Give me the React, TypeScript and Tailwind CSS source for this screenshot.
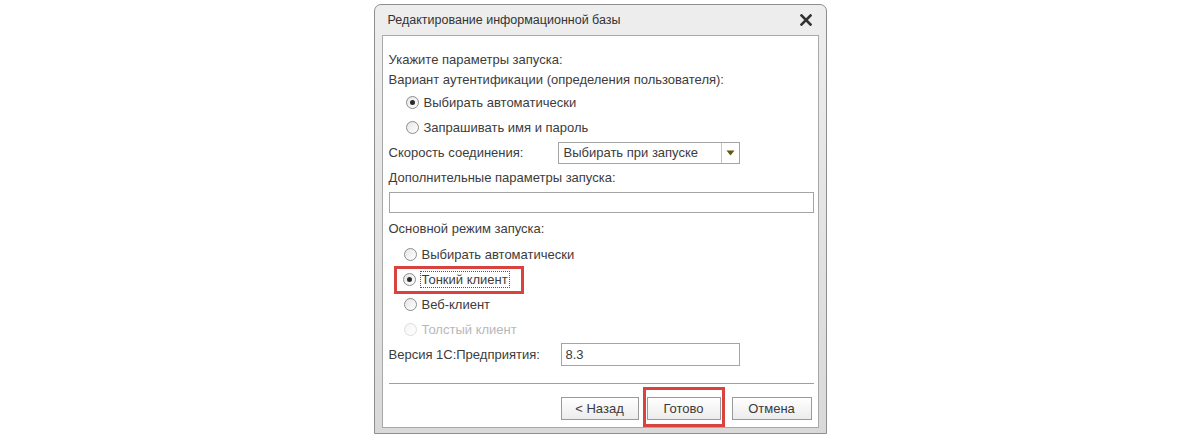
import type { ReactNode } from 'react';

const font = { fontFamily: '"Liberation Sans", Arial, sans-serif' };

function Radio({ checked, disabled }: { checked?: boolean; disabled?: boolean }) {
  return (
    <span
      className={`flex h-[13px] w-[13px] shrink-0 items-center justify-center rounded-full border bg-gradient-to-br from-[#e6e6e6] to-white ${
        disabled ? 'border-[#dedede] from-[#f4f4f4]' : 'border-[#8c8c8c]'
      }`}
    >
      {checked && <span className="h-[5px] w-[5px] rounded-full bg-[#2b2b2b]" />}
    </span>
  );
}

function RadioRow({
  label,
  checked,
  disabled,
  indent = 'pl-[17px]',
}: {
  label: string;
  checked?: boolean;
  disabled?: boolean;
  indent?: string;
}) {
  return (
    <div className={`flex h-[25px] items-center gap-[5px] ${indent}`}>
      <Radio checked={checked} disabled={disabled} />
      <span className={disabled ? 'text-[#b8b8b8]' : ''}>{label}</span>
    </div>
  );
}

function Button({ children, w = 'w-[78px]' }: { children: ReactNode; w?: string }) {
  return (
    <div
      className={`flex h-[23px] ${w} items-center justify-center border border-[#9a9a9a] bg-gradient-to-b from-white to-[#ececec] text-[#3a3a3a]`}
    >
      {children}
    </div>
  );
}

export default function App() {
  return (
    <div className="h-[437px] w-[1200px] bg-white pt-[4px]" style={font}>
      <div className="mx-auto flex h-[430px] w-[453px] flex-col rounded-t-[7px] border border-[#8e8e8e] bg-gradient-to-b from-[#eeeeee] to-[#d9d9d9] px-[7px] pb-[5px] text-[13px] text-[#3c3c3c]">
        <div className="flex h-[30px] shrink-0 items-center justify-between pl-[6px] pr-[6px] text-[12.5px] text-[#333]">
          <span>Редактирование информационной базы</span>
          <svg width="12" height="12" viewBox="0 0 12 12" className="mr-[1px]">
            <path d="M1.5 1.5 L10.5 10.5 M10.5 1.5 L1.5 10.5" stroke="#333" strokeWidth="2.6" strokeLinecap="square" />
          </svg>
        </div>
        <div className="flex flex-1 flex-col border border-[#a8a8a8] bg-white px-[6px] pt-[14px]">
          <div className="flex h-[20px] items-center">Укажите параметры запуска:</div>
          <div className="flex h-[20px] items-center">Вариант аутентификации (определения пользователя):</div>
          <RadioRow label="Выбирать автоматически" checked />
          <RadioRow label="Запрашивать имя и пароль" />
          <div className="flex h-[25px] items-center">
            <span className="w-[169px]">Скорость соединения:</span>
            <div className="flex h-[22px] w-[182px] items-center border border-[#a4a4a4]">
              <span className="flex-1 pl-[5px]">Выбирать при запуске</span>
              <span className="flex h-full w-[18px] items-center justify-center border-l border-[#c8c8c8]">
                <svg width="9" height="6" viewBox="0 0 9 6">
                  <path d="M0.5 0.5 H8.5 L4.5 5.5 Z" fill="#5d5a10" />
                </svg>
              </span>
            </div>
          </div>
          <div className="flex h-[26px] items-center">Дополнительные параметры запуска:</div>
          <div className="mt-[1px] h-[21px] w-[425px] border border-[#a4a4a4]" />
          <div className="mt-[2px] flex h-[25px] items-center pt-[2px]">Основной режим запуска:</div>
          <div className="h-[2px]" />
          <RadioRow label="Выбирать автоматически" indent="pl-[15px]" />
          <div className="flex h-[25px] items-center">
            <div className="ml-[5px] flex h-[28px] w-[130px] items-center gap-[4px] border-[3px] border-[#d8433f] pl-[6px]">
              <Radio checked />
              <span className="border border-dotted border-[#555] px-px leading-[15px]">Тонкий клиент</span>
            </div>
          </div>
          <RadioRow label="Веб-клиент" indent="pl-[15px]" />
          <RadioRow label="Толстый клиент" indent="pl-[15px]" disabled />
          <div className="flex h-[25px] items-center">
            <span className="w-[172px]">Версия 1С:Предприятия:</span>
            <div className="flex h-[23px] w-[179px] items-center border border-[#a4a4a4] pl-[4px]">8.3</div>
          </div>
          <div className="mt-[16px] h-[2px] w-[425px] border-t border-[#a0a0a0] border-b-[#f4f4f4]" />
          <div className="mt-[12px] flex items-center justify-end">
            <Button>&lt; Назад</Button>
            <div className="-mt-[10px] -mb-[7px] ml-[4px] border-[3px] border-[#d8433f] px-px pt-[7px] pb-[4px]">
              <Button w="w-[74px]">Готово</Button>
            </div>
            <div className="ml-[7px]">
              <Button w="w-[80px]">Отмена</Button>
            </div>
          </div>
        </div>
      </div>
    </div>
  );
}
